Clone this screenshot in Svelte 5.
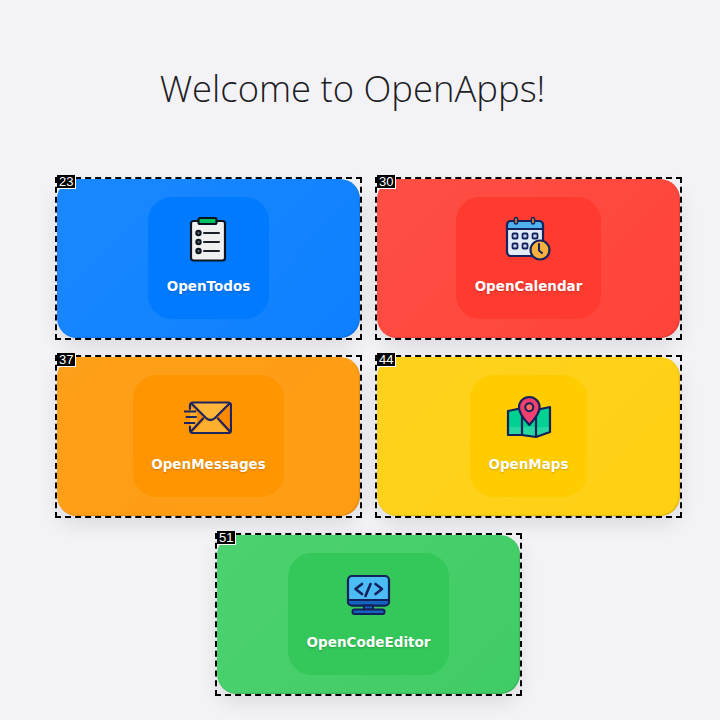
<script>
  const apps = [
    { id: 23, name: "OpenTodos", color: "blue", icon: "todos" },
    { id: 30, name: "OpenCalendar", color: "red", icon: "calendar" },
    { id: 37, name: "OpenMessages", color: "orange", icon: "messages" },
    { id: 44, name: "OpenMaps", color: "yellow", icon: "maps" },
    { id: 51, name: "OpenCodeEditor", color: "green", icon: "code" },
  ];
</script>

<main class="page">
  <h1>Welcome to OpenApps!</h1>
  <div class="grid">
    {#each apps as app}
      <div class="marked">
        <span class="tag">{app.id}</span>
        <div class="card {app.color}">
          <div class="inner">
            <svg viewBox="0 0 48 48" width="48" height="48" fill="none" stroke-linecap="round" stroke-linejoin="round">
              {#if app.icon === "todos"}
                <rect x="7" y="5" width="34" height="39.500" rx="2.500" fill="#eef1f0" stroke="#0c1420" stroke-width="2.200" />
                <rect x="14.500" y="2" width="18" height="6" rx="1.500" fill="#00c060" stroke="#0c1420" stroke-width="2.200" />
                <circle cx="14.500" cy="17" r="2.200" fill="#55606a" stroke="#0c1420" stroke-width="2" />
                <circle cx="14.500" cy="26" r="2.200" fill="#55606a" stroke="#0c1420" stroke-width="2" />
                <circle cx="14.500" cy="35" r="2.200" fill="#55606a" stroke="#0c1420" stroke-width="2" />
                <path d="M20 17h15M20 26h15M20 35h15" stroke="#1a2028" stroke-width="2" />
              {:else if app.icon === "calendar"}
                <rect x="2" y="5" width="36" height="35" rx="4" fill="#e4ecf8" stroke="#14225e" stroke-width="2.200" />
                <path d="M2 13V9a4 4 0 0 1 4-4h28a4 4 0 0 1 4 4v4z" fill="#4fb4ee" stroke="#14225e" stroke-width="2.200" />
                <rect x="9.500" y="1.500" width="3" height="6.500" rx="1.500" fill="#f5a623" stroke="#14225e" stroke-width="1.600" />
                <rect x="26.500" y="1.500" width="3" height="6.500" rx="1.500" fill="#f5a623" stroke="#14225e" stroke-width="1.600" />
                <g fill="#c7d7f2" stroke="#14225e" stroke-width="1.800">
                  <rect x="7.500" y="17.500" width="5" height="5" rx="1" />
                  <rect x="17.500" y="17.500" width="5" height="5" rx="1" />
                  <rect x="27.500" y="17.500" width="5" height="5" rx="1" />
                  <rect x="7.500" y="27.500" width="5" height="5" rx="1" />
                  <rect x="17.500" y="27.500" width="5" height="5" rx="1" />
                </g>
                <circle cx="35" cy="34" r="9.500" fill="#fbb13c" stroke="#14225e" stroke-width="2.200" />
                <path d="M34 28v6.500l3 2.500" stroke="#14225e" stroke-width="2" />
              {:else if app.icon === "messages"}
                <path d="M9 8.500h35a3 3 0 0 1 3 3v24.500a3 3 0 0 1-3 3H9a3 3 0 0 1-3-3L13 29V18L6 11.500a3 3 0 0 1 3-3z" fill="#ff8a00" />
                <path d="M6 36L13 29V18L6 11zM8 39L21 25.500q5.500 3.500 11-.5l13 14z" fill="#ffb02e" />
                <path d="M8 8.500h37L30 24q-4 4-8 0z" fill="#ffb43a" />
                <path d="M6 15V11.500a3 3 0 0 1 3-3h35a3 3 0 0 1 3 3v24.500a3 3 0 0 1-3 3H9a3 3 0 0 1-3-3v-3.500" stroke="#1e2460" stroke-width="2.200" />
                <path d="M7.500 9.500L22 24q4.500 4 9 0L45.500 9.500M7 37.500L19 24.500M46 37.500L34 24.500" stroke="#1e2460" stroke-width="2.200" />
                <path d="M0.500 17.500h11M2.500 23h9.500M0.500 29h10" stroke="#1e2460" stroke-width="2" />
              {:else if app.icon === "maps"}
                <path d="M3 17l14-3 14 2 14-3v25l-14 5-14-1-14 0z" fill="#00d091" />
                <path d="M3 33h42v5l-14 5-14-1-14-2z" fill="#28d6a2" />
                <path d="M3 17l14-3 14 2 14-3v25l-14 5-14-2-14 0zM17 14v27M31 16v27" stroke="#14205a" stroke-width="2.200" />
                <path d="M24.300 31C20 26 14 20.500 14 13.300a10.300 10.300 0 0 1 20.600 0C34.600 20.500 28.600 26 24.300 31z" fill="#f0406f" stroke="#14205a" stroke-width="2.200" />
                <circle cx="24.300" cy="13.300" r="4" fill="#ff6b5e" stroke="#14205a" stroke-width="2" />
              {:else}
                <rect x="3" y="4" width="41" height="29.500" rx="4" fill="#4bbcf4" stroke="#14205a" stroke-width="2.200" />
                <path d="M3 28h41v1.500a4 4 0 0 1-4 4H7a4 4 0 0 1-4-4z" fill="#1565c0" stroke="#14205a" stroke-width="2" />
                <rect x="19" y="33.500" width="9" height="4" fill="#1565c0" stroke="#14205a" stroke-width="2" />
                <rect x="7.500" y="37.500" width="32" height="4.500" rx="2" fill="#1565c0" stroke="#14205a" stroke-width="2" />
                <path d="M17 12l-6.500 5 6.500 5M30.500 12l6.500 5-6.500 5M25.500 12l-5 12" stroke="#14205a" stroke-width="2.600" />
              {/if}
            </svg>
            <span class="label">{app.name}</span>
          </div>
        </div>
      </div>
    {/each}
  </div>
</main>

<style>
  :global(body) {
    margin: 0;
    background: #f2f2f7;
  }

  .page {
    width: 705px;
    height: 720px;
    overflow: hidden;
    font-family: "DejaVu Sans", sans-serif;
  }

  h1 {
    margin: 0;
    padding-top: 66px;
    height: 179px;
    box-sizing: border-box;
    font-family: "Open Sans", sans-serif;
    font-size: 36.400px;
    line-height: 44px;
    font-weight: 300;
    color: #1c1c1e;
    text-align: center;
  }

  .grid {
    width: 623px;
    margin-left: 57px;
    display: flex;
    flex-wrap: wrap;
    justify-content: center;
    column-gap: 17px;
    row-gap: 19px;
  }

  .marked {
    position: relative;
    width: 303px;
    height: 159px;
    outline: 2px dashed #000;
  }

  .tag {
    position: absolute;
    left: 0;
    top: -4px;
    z-index: 2;
    padding: 0 2px;
    background: #000;
    color: #fff;
    font: 13px/13px "Liberation Sans", sans-serif;
    border: 1px solid #fff;
    border-width: 0 1px 1px 0;
  }

  .card {
    height: 100%;
    box-sizing: border-box;
    border-radius: 20px;
    display: flex;
    align-items: center;
    justify-content: center;
    box-shadow:
      0 8px 20px rgba(0, 0, 0, 0.1),
      inset -1px -1px 1px rgba(0, 0, 0, 0.12);
  }

  .inner {
    display: flex;
    flex-direction: column;
    align-items: center;
    gap: 11px;
    padding: 19px 18.500px 22px;
    margin-bottom: 1px;
    border-radius: 24px;
  }

  .label {
    color: #fff;
    font-size: 13.500px;
    line-height: 22px;
    font-weight: 700;
    text-shadow: 0 1px 2px rgba(0, 0, 0, 0.2);
  }

  .blue {
    background: linear-gradient(135deg, #1a88ff, #0e80ff);
  }
  .blue .inner {
    background: #007aff;
  }
  .red {
    background: linear-gradient(135deg, #ff4f45, #ff433a);
  }
  .red .inner {
    background: #ff3b30;
  }
  .orange {
    background: linear-gradient(135deg, #ffa01a, #ff9c12);
  }
  .orange .inner {
    background: #ff9500;
  }
  .yellow {
    background: linear-gradient(135deg, #ffd21f, #ffd012);
  }
  .yellow .inner {
    background: #ffcc00;
  }
  .green {
    background: linear-gradient(135deg, #4cd26f, #40cc64);
  }
  .green .inner {
    background: #34c759;
  }
</style>
